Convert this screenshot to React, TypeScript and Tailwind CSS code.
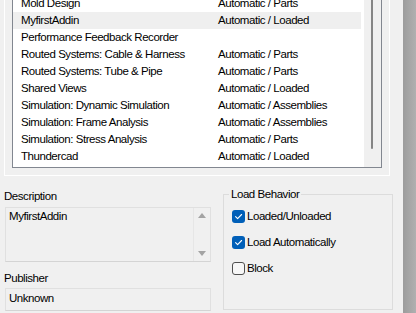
import React from "react";

const rows: [string, string][] = [
  ["Mold Design", "Automatic / Parts"],
  ["MyfirstAddin", "Automatic / Loaded"],
  ["Performance Feedback Recorder", ""],
  ["Routed Systems: Cable & Harness", "Automatic / Parts"],
  ["Routed Systems: Tube & Pipe", "Automatic / Parts"],
  ["Shared Views", "Automatic / Loaded"],
  ["Simulation: Dynamic Simulation", "Automatic / Assemblies"],
  ["Simulation: Frame Analysis", "Automatic / Assemblies"],
  ["Simulation: Stress Analysis", "Automatic / Parts"],
  ["Thundercad", "Automatic / Loaded"],
];

function Check({ checked }: { checked: boolean }) {
  return checked ? (
    <span className="w-[13px] h-[13px] rounded-[3px] bg-[#005fb8] flex items-center justify-center shrink-0">
      <svg width="13" height="13" viewBox="0 0 13 13">
        <path d="M3.6 6.7 L5.6 8.7 L9.6 4.5" fill="none" stroke="white" strokeWidth="1.1" strokeLinecap="round" strokeLinejoin="round" />
      </svg>
    </span>
  ) : (
    <span className="w-[13px] h-[13px] rounded-[3px] border border-[#4f4f4f] bg-[#f7f7f7] shrink-0" />
  );
}

function CheckRow({ checked, label }: { checked: boolean; label: string }) {
  return (
    <div className="h-[16px] flex items-center leading-[16px] whitespace-nowrap">
      <Check checked={checked} />
      <span className="ml-[2px]">{label}</span>
    </div>
  );
}

export default function App() {
  return (
    <div className="w-[416px] h-[313px] overflow-hidden bg-[#f0f0f0] flex text-black font-['Liberation_Sans',Arial,sans-serif] text-[11.5px] tracking-[-0.45px]">
      <div className="w-[403px] flex flex-col">
        {/* tab page frame with list */}
        <div className="ml-[4px] w-[386px] h-[176px] shrink-0 border-x border-b border-white px-[7px] pb-[7px] flex">
          <div className="flex-1 flex border-x border-b border-[#828790] bg-white overflow-hidden">
            <div className="w-[351px] flex flex-col -mt-[5px]">
              {rows.map(([name, status], i) => (
                <div
                  key={name}
                  className={`h-[17px] leading-[17px] flex mr-[3px] whitespace-nowrap ${i === 1 ? "bg-[#efefef]" : ""}`}
                >
                  <span className="w-[205px] pl-[8px] shrink-0">{name}</span>
                  <span>{status}</span>
                </div>
              ))}
            </div>
            <div className="w-[17px] bg-[#f0f0f0] flex flex-col">
              <div className="ml-[7px] w-[2px] h-[149px] bg-[#858585] rounded-b-full" />
            </div>
          </div>
        </div>

        {/* bottom section */}
        <div className="flex flex-1">
          <div className="ml-[4px] w-[207px] flex flex-col shrink-0">
            <div className="mt-[12px] h-[16px] leading-[16px]">Description</div>
            <div className="mt-[3px] ml-[1px] h-[55px] border border-[#e0e0e0] border-b-[#d4d4d4] flex">
              <div className="flex-1 pl-[3px] leading-[16px]">MyfirstAddin</div>
              <div className="w-[17px] border-l border-[#e6e6e6] flex flex-col items-center justify-between py-[5px]">
                <svg width="8" height="5" viewBox="0 0 8 5">
                  <path d="M4 0 L8 5 L0 5 Z" fill="#a3a3a3" />
                </svg>
                <svg width="8" height="5" viewBox="0 0 8 5">
                  <path d="M0 0 L8 0 L4 5 Z" fill="#a3a3a3" />
                </svg>
              </div>
            </div>
            <div className="mt-[8px] h-[16px] leading-[16px]">Publisher</div>
            <div className="mt-[2px] ml-[1px] h-[23px] border border-[#e0e0e0] border-b-[#d4d4d4] pl-[3px] pt-[1px] leading-[16px]">Unknown</div>
          </div>

          <div className="ml-[12px] mt-[18px] w-[170px] h-[116px] border border-[#dcdcdc] relative pl-[8px] pt-[13px] flex flex-col gap-[10px]">
            <span className="absolute -top-[9px] left-[5px] px-[2px] bg-[#f0f0f0] leading-[16px]">Load Behavior</span>
            <CheckRow checked label="Loaded/Unloaded" />
            <CheckRow checked label="Load Automatically" />
            <CheckRow checked={false} label="Block" />
          </div>
        </div>
      </div>
      <div className="w-[13px] bg-gradient-to-r from-[#9c9c9c] to-[#b0b0b0]" />
    </div>
  );
}
